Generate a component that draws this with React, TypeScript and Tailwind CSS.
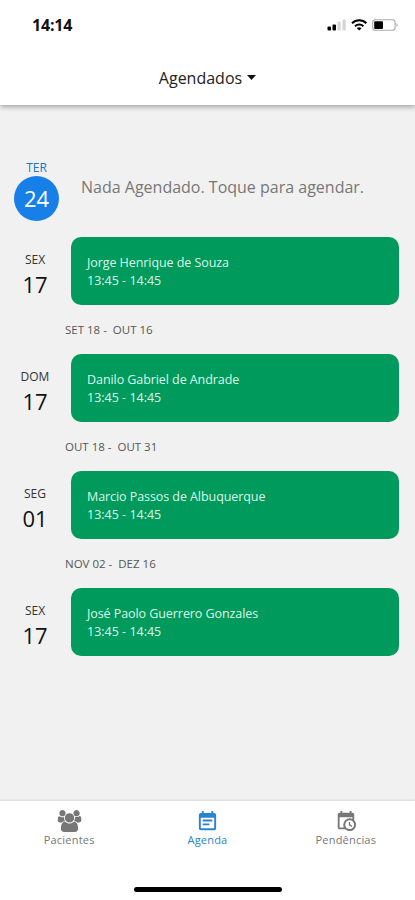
import React from "react";

const appointments = [
  { day: "SEX", date: "17", name: "Jorge Henrique de Souza", spacing: "tracking-[-0.07px]", range: "SET 18 -\u00a0 OUT 16" },
  { day: "DOM", date: "17", name: "Danilo Gabriel de Andrade", spacing: "tracking-[-0.07px]", range: "OUT 18 -\u00a0 OUT 31" },
  { day: "SEG", date: "01", name: "Marcio Passos de Albuquerque", spacing: "tracking-[-0.07px]", range: "NOV 02 -\u00a0 DEZ 16" },
  { day: "SEX", date: "17", name: "José Paolo Guerrero Gonzales", spacing: "tracking-[-0.07px]", range: "" },
];

function StatusIcons() {
  return (
    <svg width="72" height="14" viewBox="0 0 72 14">
      <rect x="0.5" y="8.5" width="3.5" height="4" rx="1" fill="#000" />
      <rect x="5.5" y="6.5" width="3.5" height="6" rx="1" fill="#000" />
      <rect x="10.5" y="3.5" width="3.2" height="9" rx="1" fill="#d4d4d4" />
      <rect x="15.5" y="1.5" width="3.2" height="11" rx="1" fill="#d4d4d4" />
      <g fill="none" stroke="#000" strokeWidth="2">
        <path d="M25 5.2a10.4 10.4 0 0 1 14.4 0" />
        <path d="M28 8.2a6 6 0 0 1 8.4 0" />
      </g>
      <path d="M29.8 10.2a3.6 3.6 0 0 1 4.8 0L32.2 12.6z" fill="#000" />
      <rect x="45.7" y="1.7" width="22.4" height="10.6" rx="2.8" fill="#fff" stroke="#aaa" strokeWidth="1.1" />
      <rect x="47.2" y="3.2" width="8.8" height="7.8" rx="1" fill="#000" />
      <path d="M69.5 5v4c1.6-.5 1.6-3.500 0-4z" fill="#aaa" />
    </svg>
  );
}

function PatientsIcon() {
  return (
    <svg width="25" height="22" viewBox="0 0 2048 1792" fill="currentColor">
      <path d="M657 896q-162 5-265 128h-134q-82 0-138-40.500t-56-118.500q0-353 124-353 6 0 43.500 21t97.500 42.500 119 21.500q67 0 133-23-5 37-5 66 0 159 93 287zm1071 637q0 120-73 189.500t-194 69.500h-874q-121 0-194-69.500t-73-189.500q0-53 3.500-103.500t14-109 26.500-108.500 43-97.500 62-81 85.500-53.500 111.500-20q10 0 43 21.500t73 48 107 48 135 21.500 135-21.500 107-48 73-48 43-21.500q61 0 111.500 20t85.500 53.500 62 81 43 97.500 26.500 108.500 14 109 3.500 103.500zm-1024-1277q0 106-75 181t-181 75-181-75-75-181 75-181 181-75 181 75 75 181zm704 384q0 159-112.500 271.500t-271.500 112.500-271.500-112.500-112.500-271.500 112.500-271.500 271.500-112.500 271.500 112.500 112.500 271.500zm576 225q0 78-56 118.500t-138 40.500h-134q-103-123-265-128 93-128 93-287 0-29-5-66 66 23 133 23 59 0 119-21.500t97.500-42.500 43.500-21q124 0 124 353zm-128-609q0 106-75 181t-181 75-181-75-75-181 75-181 181-75 181 75 75 181z" />
    </svg>
  );
}

function AgendaIcon() {
  return (
    <svg width="23" height="23" viewBox="0 0 24 24" fill="currentColor">
      <path d="M14,14H7V16H14M19,19H5V8H19M19,3H18V1H16V3H8V1H6V3H5C3.89,3 3,3.9 3,5V19A2,2 0 0,0 5,21H19A2,2 0 0,0 21,19V5A2,2 0 0,0 19,3M17,10H7V12H17V10Z" />
    </svg>
  );
}

function PendingIcon() {
  return (
    <svg width="22" height="22" viewBox="0 0 24 24" fill="currentColor">
      <path d="M15,13H16.5V15.82L18.94,17.23L18.19,18.53L15,16.69V13M19,8H5V19H9.67C9.24,18.09 9,17.07 9,16A7,7 0 0,1 16,9C17.07,9 18.09,9.24 19,9.67V8M5,21C3.89,21 3,20.1 3,19V5C3,3.89 3.89,3 5,3H6V1H8V3H16V1H18V3H19A2,2 0 0,1 21,5V11.1C22.24,12.36 23,14.09 23,16A7,7 0 0,1 16,23C14.09,23 12.36,22.24 11.1,21H5M16,11.15A4.85,4.85 0 0,0 11.15,16C11.15,18.68 13.32,20.85 16,20.85A4.85,4.85 0 0,0 20.85,16C20.85,13.32 18.68,11.15 16,11.15Z" />
    </svg>
  );
}

function Tab({ label, icon, color }: { label: string; icon: React.ReactNode; color: string }) {
  return (
    <div className={`flex flex-1 flex-col items-center ${color}`}>
      <div className="flex h-[24px] items-center">{icon}</div>
      <span className="text-[11px] leading-[14px] tracking-[0.2px]">{label}</span>
    </div>
  );
}

export default function App() {
  return (
    <div className="flex h-[900px] w-[415px] flex-col overflow-hidden bg-[#f1f1f1] font-['Open_Sans','Noto_Sans',sans-serif]">
      <header className="flex h-[105px] shrink-0 flex-col bg-white shadow-[0_2px_5px_rgba(0,0,0,0.32)]">
        <div className="flex h-[50px] items-center justify-between pr-[16px] pl-[32px]">
          <span className="text-[16px] font-bold tracking-[-0.2px] text-[#111]">14:14</span>
          <StatusIcons />
        </div>
        <div className="flex h-[55px] items-center justify-center gap-[5px] text-[#222]">
          <span className="text-[16px] font-medium">Agendados</span>
          <svg width="9" height="5" viewBox="0 0 9 5"><path d="M0 0h9L4.500 5z" fill="#111" /></svg>
        </div>
      </header>

      <main className="flex grow flex-col">
        <section className="mt-[55px] flex h-[61px]">
          <div className="ml-[14px] flex w-[45px] flex-col items-center">
            <span className="h-[16px] text-[12px] leading-[16px] text-[#1877c9]">TER</span>
            <span className="flex size-[45px] shrink-0 items-center justify-center rounded-full bg-[#167fe8] text-[22px] font-medium text-white">24</span>
          </div>
          <p className="mt-[15px] ml-[22px] text-[16px] leading-[24px] whitespace-nowrap text-[#777]">Nada Agendado. Toque para agendar.</p>
        </section>

        <div className="mt-[16px] flex flex-col">
          {appointments.map((a) => (
            <section key={a.name} className="h-[117px]">
              <div className="flex h-[68px]">
                <div className="flex w-[71px] flex-col items-center pt-[15px] pr-px text-[#111]">
                  <span className="text-[12px] leading-[16px] text-[#333]">{a.day}</span>
                  <span className="mt-[2px] text-[22px] leading-[28px] font-medium">{a.date}</span>
                </div>
                <div className="flex w-[328px] flex-col rounded-[10px] bg-[#009a5c] pt-[17px] pl-4 text-[12.5px] leading-[18px] text-[#dcf8e9]">
                  <span className={a.spacing}>{a.name}</span>
                  <span>13:45 - 14:45</span>
                </div>
              </div>
              {a.range && <p className="ml-[65px] mt-[17px] text-[11.5px] leading-[16px] text-[#555]">{a.range}</p>}
            </section>
          ))}
        </div>
      </main>

      <footer className="flex h-[99px] shrink-0 flex-col items-center bg-white shadow-[0_-1px_2px_rgba(0,0,0,0.1)]">
        <nav className="flex w-full pt-[8px]">
          <Tab label="Pacientes" icon={<PatientsIcon />} color="text-[#777]" />
          <Tab label="Agenda" icon={<AgendaIcon />} color="text-[#2a82d0]" />
          <Tab label="Pendências" icon={<PendingIcon />} color="text-[#777]" />
        </nav>
        <div className="mt-[40px] h-[5px] w-[148px] rounded-full bg-black" />
      </footer>
    </div>
  );
}
